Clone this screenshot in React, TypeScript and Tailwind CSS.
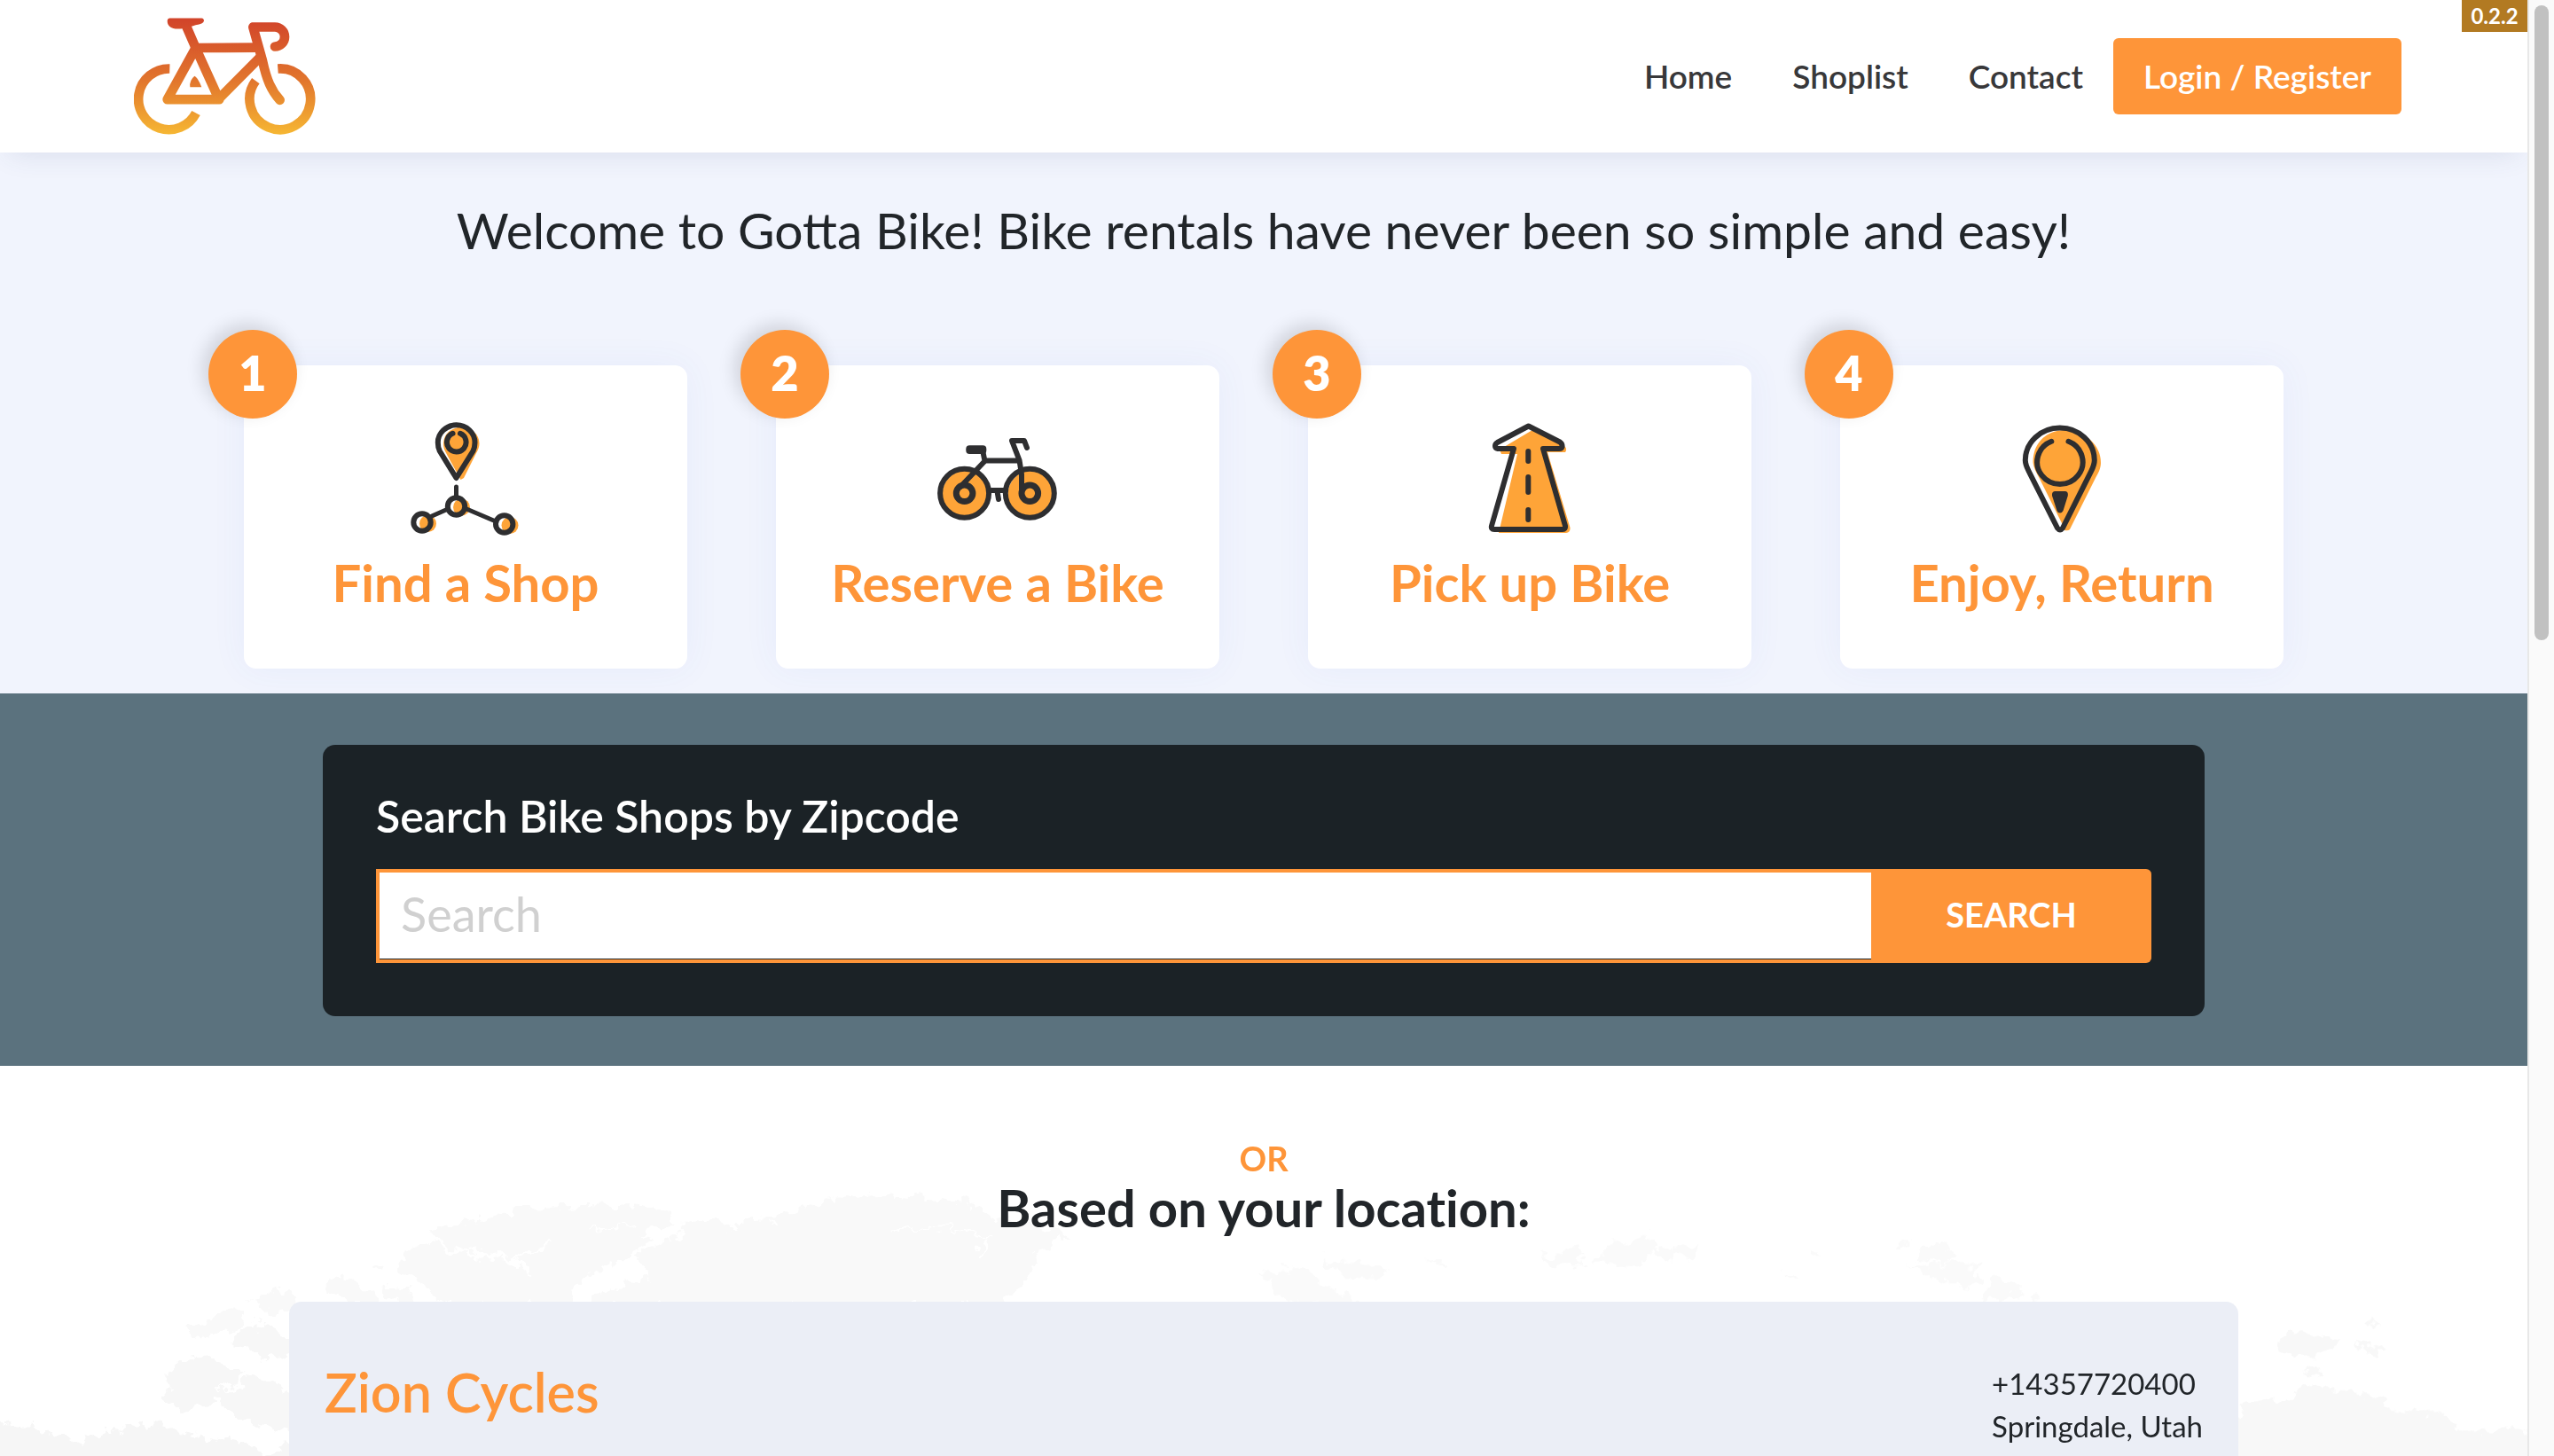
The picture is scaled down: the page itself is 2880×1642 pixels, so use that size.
import type { ReactNode } from "react";

const INK = "#2e2e30";
const FILL = "#fea438";

function Logo() {
  return (
    <svg viewBox="93 60 615 395" className="h-[132px] w-[205px]" role="img" aria-label="Gotta Bike">
      <defs>
        <linearGradient id="logo" gradientUnits="userSpaceOnUse" x1="0" y1="60" x2="0" y2="455">
          <stop offset="0" stopColor="#d1432a" />
          <stop offset="0.55" stopColor="#e2772d" />
          <stop offset="1" stopColor="#f6b733" />
        </linearGradient>
      </defs>
      <g fill="none" stroke="url(#logo)" strokeWidth="32" strokeLinejoin="round">
        <path d="M214 232 A103 103 0 1 0 303 382" />
        <path d="M580 232 A103 103 0 1 1 505 273" />
        <g strokeLinecap="round">
          <path d="M382 336 H206 L302 162 L380 334 L520 193" />
          <path d="M272 92 L302 161.5 L510 160.5" />
          <path d="M587 338 C558 306 542 270 528 205 L496 91 H570 A33 33 0 0 1 570 157" />
        </g>
      </g>
      <path fill="url(#logo)" d="M213 61 H322 Q330 62 330 70 Q328 81 302 84 L284 90 L258 96 Q207 103 206 70 Q206 62 213 61 Z" />
      <path fill="url(#logo)" d="M298 257 Q308 260 322 294 H283 Q280 272 298 257 Z" />
    </svg>
  );
}

function StepIcon({ children }: { children: ReactNode }) {
  return (
    <svg viewBox="0 0 136 136" aria-hidden="true" className="size-[136px]" fill="none" strokeLinecap="round" strokeLinejoin="round">
      {children}
    </svg>
  );
}

function FindIcon() {
  return (
    <StepIcon>
      <g fill={FILL}>
        <path d="M62.5 69 L45 37 C43 33 43 30 43 28 A20 18 0 0 1 83.5 28 C83.5 32 82 36 80 39 L66 67 Z" />
        <circle cx="63.5" cy="100" r="9.5" />
        <circle cx="25.5" cy="118.5" r="9.5" />
        <circle cx="118" cy="120.5" r="9.5" />
      </g>
      <g stroke={INK} strokeWidth="6">
        <path d="M57.5 67 L39 37 C37 33.5 36.8 30 36.8 27 A20.8 19.6 0 0 1 78.5 27 C78.5 30 78 33.5 76.3 37 Z" />
        <path d="M53.5 16.8 A10.8 10.8 0 1 0 62 16.8" />
        <path d="M57.5 77 V88 M30 110 L47 102.5 M68 101.5 L102 116" strokeWidth="5" />
        <circle cx="57.5" cy="99" r="9.7" />
        <circle cx="19" cy="117" r="9.7" />
        <circle cx="111.7" cy="119" r="9.7" />
      </g>
    </StepIcon>
  );
}

function BikeIcon() {
  return (
    <StepIcon>
      <g fill={FILL}>
        <circle cx="32.5" cy="85.5" r="27" />
        <circle cx="106.5" cy="85.5" r="27" />
      </g>
      <rect x="32.3" y="30.3" width="23" height="9.7" rx="4" fill={INK} />
      <g stroke={INK} strokeWidth="6">
        <circle cx="30.6" cy="84.3" r="27.5" />
        <circle cx="104.3" cy="84.3" r="27.5" />
        <circle cx="30.6" cy="84.3" r="9.3" strokeWidth="7" />
        <circle cx="104.3" cy="84.3" r="9.3" strokeWidth="7" />
        <path d="M51.5 38 L53.5 48 L26 77 M53.5 47.6 H92" />
        <path d="M101 33 L98 25 H84 L92.5 47 L95 63 V84" />
        <path d="M61 81 H76 M67.5 82 L69 91" />
      </g>
    </StepIcon>
  );
}

function RoadIcon() {
  return (
    <StepIcon>
      <path
        fill={FILL}
        d="M71 13 L106 30 Q111 34 108 38 H88 L113.5 123 Q114 128 109 129 H33 L54 40 H36 L34 35 Z"
      />
      <g stroke={INK} strokeWidth="6">
        <path d="M66.6 8.5 L102 26.5 Q105 28.5 104.5 32 Q104 34 101 34 H83 L108 121 Q108.5 125 105 125 H28 Q24 125 25 121 L50 34 H32 Q29 33.5 29 31 Q29 28.5 31.5 27 Z" />
        <path d="M66.3 37 V48 M66.3 66 V83 M66.3 103 V114" />
      </g>
    </StepIcon>
  );
}

function PinIcon() {
  return (
    <StepIcon>
      <path
        fill={FILL}
        d="M69 120 L42 66 C37 57 35.5 52 35.5 48 C36 28 50 13.5 71 13 C92 13 112 28 112 50 C112 56 109 62 106 67 L77 125 Q75 127 71 126 Z"
      />
      <g stroke={INK} strokeWidth="6">
        <path d="M63 123.5 L30.5 59 C28 54 26.8 51 26.8 47 A39 36.5 0 0 1 104.8 47 C104.8 51 103.5 54.5 101.3 59 L69 123.5 Q66 127.5 63 123.5 Z" />
        <path d="M56.3 25.8 A25.7 25 0 1 0 75.5 25.8" />
      </g>
      <path fill={INK} d="M60 82 H72 Q75.5 82.5 74.8 87 L69.5 104 Q68 106.5 66 106.5 Q63.5 106.5 62.5 104 L57 87 Q56.5 82.5 60 82 Z" />
    </StepIcon>
  );
}

const steps = [
  { label: "Find a Shop", icon: <FindIcon /> },
  { label: "Reserve a Bike", icon: <BikeIcon /> },
  { label: "Pick up Bike", icon: <RoadIcon /> },
  { label: "Enjoy, Return", icon: <PinIcon /> },
];

function WorldMap() {
  return (
    <svg
      aria-hidden="true"
      viewBox="0 0 2850 440"
      preserveAspectRatio="xMidYMin slice"
      className="absolute inset-0 h-full w-full"
    >
      <defs>
        <filter id="coast" x="-5%" y="-5%" width="110%" height="110%">
          <feTurbulence type="fractalNoise" baseFrequency="0.07" numOctaves="3" seed="4" result="n" />
          <feDisplacementMap in="SourceGraphic" in2="n" scale="24" xChannelSelector="R" yChannelSelector="G" />
        </filter>
      </defs>
      <g filter="url(#coast)">
        <g transform="translate(4 42) scale(.829 .3333)" fill="#f9f9f9">
          <path d="M700 360 L790 345 L870 350 L920 400 L860 440 L890 460 L830 540 L785 600 L770 684 L600 684 L570 610 L540 580 L545 490 L590 470 L580 430 L640 400 Z" />
          <path d="M925 410 L1050 385 L1100 340 L1200 312 L1310 330 L1345 380 L1450 440 L1400 520 L1390 600 L1360 684 L800 684 L800 650 L880 590 L860 510 L925 450 Z" />
          <path d="M440 585 L480 600 L512 684 L470 684 L440 640 Z M520 620 L555 640 L550 680 L525 670 Z M498 545 L515 545 L512 568 Z" />
          <path d="M340 665 L385 628 L398 650 L395 700 L360 712 Z M290 715 L330 705 L320 760 L260 800 L250 765 Z M340 735 L352 735 L350 748 Z" />
          <path d="M320 770 L360 755 L393 800 L393 850 L360 868 L310 820 Z" fill="#f7f7f7" />
          <path d="M230 870 L270 860 L330 915 L300 960 L275 1020 L245 1045 L218 1000 Z M340 925 L393 970 L393 1110 L310 1060 L285 990 Z" fill="#f7f7f7" />
          <path d="M-30 1080 L40 1095 L105 1145 L190 1080 L245 1110 L330 1150 L350 1190 L393 1150 L393 1260 L-30 1260 Z" fill="#f6f6f6" />
          <g fill="none" stroke="#fff" strokeWidth="9">
            <path d="M585 465 L625 510 L690 520 L745 480 M650 520 L640 490 M690 520 L712 570" />
            <path d="M800 425 L860 415 M1210 430 L1280 420 L1345 450 M1340 455 L1325 510 M985 400 L995 430 M1040 395 L1050 425" strokeWidth="5" />
          </g>
        </g>
        <g transform="translate(1304 42) scale(1.0077 .3333)" fill="#fafafa">
          <path d="M118 580 L165 555 L200 640 L230 684 L145 684 Z M185 530 L260 550 L250 595 L200 580 Z M303 540 L322 535 L320 550 Z" />
          <path d="M430 520 L475 495 L480 545 L450 550 Z M492 540 L510 480 L550 445 L560 500 L530 555 Z M555 500 L605 480 L600 510 L565 530 Z" />
          <path d="M730 490 H744 V506 H730 Z M705 575 H718 V586 H705 Z M830 470 H842 V480 H830 Z" />
          <path d="M855 500 L875 472 L897 510 L885 545 L853 530 Z M842 550 L918 545 L920 610 L905 628 L865 590 Z M920 670 L940 590 L970 630 L960 655 Z M975 655 H990 V668 H975 Z" />
          <g fill="#f8f8f8">
            <path d="M1252 810 L1270 770 L1325 800 L1320 830 L1272 855 Z M1338 805 L1376 830 L1365 855 Z M1283 900 L1300 895 L1310 930 L1295 935 Z M1356 740 H1365 V750 H1356 Z" />
            <path d="M1215 1020 L1270 1000 L1290 955 L1360 985 L1390 1050 L1440 1045 L1460 1110 L1540 1100 L1590 1100 L1590 1260 L1180 1260 Z" />
          </g>
        </g>
      </g>
    </svg>
  );
}

export default function App() {
  return (
    <div className="flex h-screen overflow-hidden bg-white font-['Lato',sans-serif] text-[#212529]">
      <div className="relative min-w-0 flex-1 overflow-hidden">
        <header className="relative z-10 flex h-[172px] items-center justify-between bg-white pr-[142px] pl-[151px] shadow-[0_10px_30px_-10px_rgba(60,70,110,0.14)]">
          <a href="#home">
            <Logo />
          </a>
          <nav className="flex items-center text-[37px] leading-[48px] font-semibold text-[#38383a]">
            <a href="#home" className="px-[34px]">Home</a>
            <a href="#shoplist" className="px-[34px]">Shoplist</a>
            <a href="#contact" className="px-[34px]">Contact</a>
            <a href="#login" className="flex h-[86px] items-center rounded-md bg-[#fe9539] px-[34px] text-white">
              Login / Register
            </a>
          </nav>
          <span className="absolute top-0 right-0 flex h-9 w-[74px] items-center justify-center bg-[#b27a22] text-2xl font-bold text-white">
            0.2.2
          </span>
        </header>

        <main>
          <section className="bg-[#f1f4fd] pt-[53px] pb-7">
            <h1 className="text-center text-[57px] leading-[68px]">
              Welcome to Gotta Bike! Bike rentals have never been so simple and easy!
            </h1>
            <ol className="mx-auto mt-[119px] grid max-w-[2400px] grid-cols-4 gap-[100px] px-[50px]">
              {steps.map((step, i) => (
                <li
                  key={step.label}
                  className="relative flex flex-col items-center rounded-[14px] bg-white pt-[60px] pb-[62px] shadow-[0_0_40px_rgba(70,110,220,0.06)]"
                >
                  <span className="absolute -top-10 -left-10 flex size-[100px] items-center justify-center rounded-full bg-[#fe9539] pb-1 text-[54px] font-extrabold text-white shadow-[-6px_-6px_20px_rgba(0,0,0,0.14)]">
                    {i + 1}
                  </span>
                  {step.icon}
                  <h2 className="mt-3.5 text-[58px] leading-[70px] font-bold text-[#fe9539]">{step.label}</h2>
                </li>
              ))}
            </ol>
          </section>

          <section className="bg-[#5b727e] pt-[58px] pb-14">
            <form
              className="mx-auto w-[2122px] max-w-full rounded-[14px] bg-[#1b2226] px-[60px] pt-12 pb-[60px]"
              onSubmit={(e) => e.preventDefault()}
            >
              <label htmlFor="zipcode" className="block text-[50px] leading-[64px] font-semibold text-white">
                Search Bike Shops by Zipcode
              </label>
              <div className="mt-7 flex h-[106px] overflow-hidden rounded-r-md border-4 border-r-0 border-[#fe9539] bg-[#fe9539]">
                <input
                  id="zipcode"
                  type="text"
                  placeholder="Search"
                  className="min-w-0 flex-1 border-b border-[#1b2226] bg-white px-6 pb-1 text-[54px] outline-none placeholder:text-[#d0d0d0]"
                />
                <button type="submit" className="w-[316px] pb-1 text-[38px] font-bold text-white">
                  SEARCH
                </button>
              </div>
            </form>
          </section>

          <section className="relative h-[440px] bg-white pt-[82px]">
            <WorldMap />
            <div className="relative">
              <p className="text-center text-[38px] leading-[44px] font-bold text-[#fe9539]">OR</p>
              <h2 className="text-center text-[58px] leading-[68px] font-bold [font-variant-ligatures:none]">
                Based on your location:
              </h2>
              <article className="mx-auto mt-[72px] flex w-[2198px] max-w-full items-start justify-between rounded-[14px] bg-[#ebeef6] px-10 pt-[68px] pb-20">
                <h3 className="text-[61px] leading-[68px] font-semibold text-[#fe9539]">Zion Cycles</h3>
                <address className="text-[33px] leading-[48px] not-italic">
                  <p>+14357720400</p>
                  <p>Springdale, Utah</p>
                </address>
              </article>
            </div>
          </section>
        </main>
      </div>

      <div aria-hidden="true" className="w-[30px] shrink-0 border-l-2 border-[#e8e8e8] bg-[#fafafa] pt-1.5 pl-1.5">
        <div className="h-[716px] w-4 rounded-full bg-[#c1c1c1]" />
      </div>
    </div>
  );
}
